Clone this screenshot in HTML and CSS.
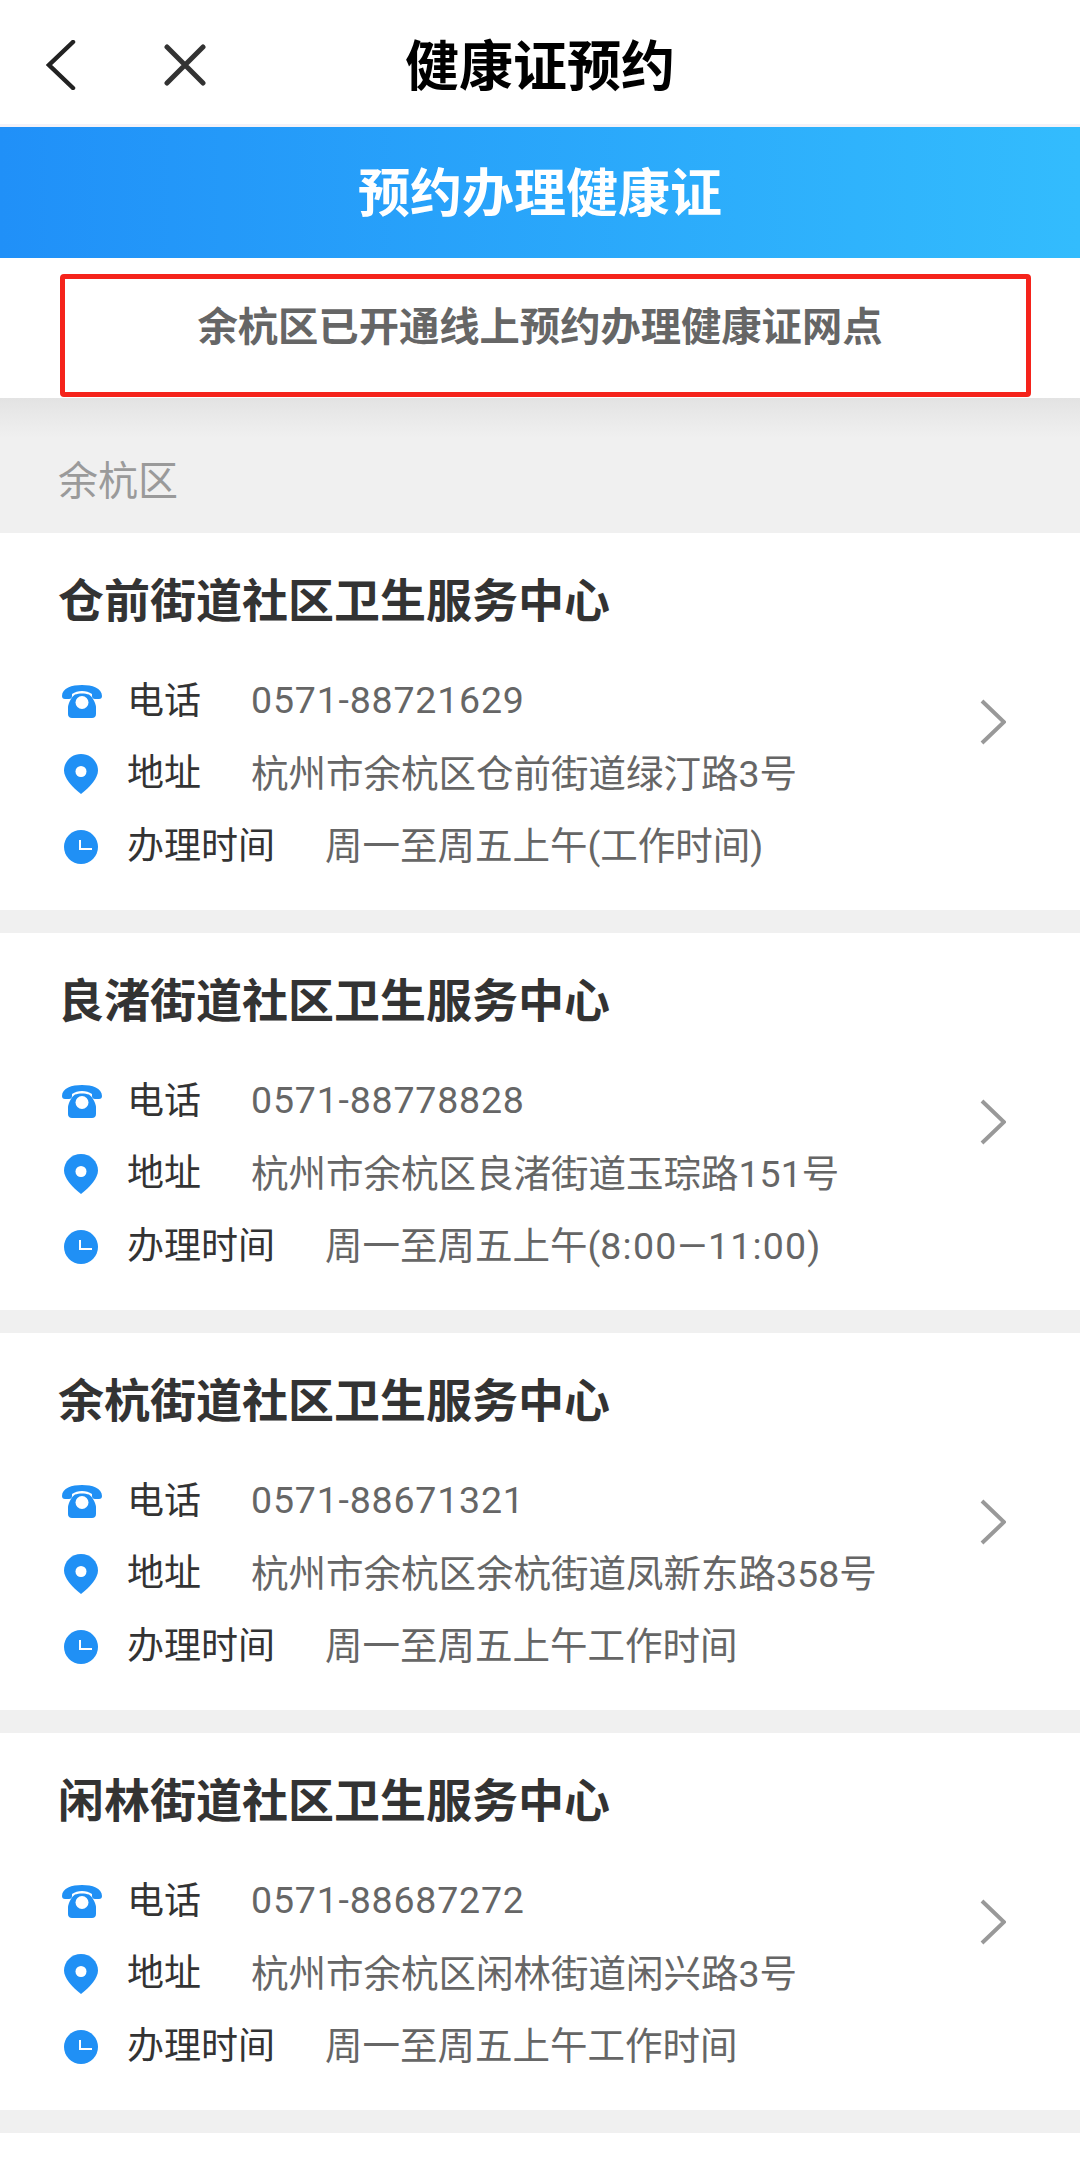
FILE: index.html
```html
<!DOCTYPE html>
<html lang="zh-CN">
<head>
    <meta charset="UTF-8">
    <meta name="viewport" content="width=device-width, initial-scale=1.0">
    <title>健康证预约</title>
    <link rel="stylesheet" href="styles.css">
</head>
<body>
    <svg class="svg-defs" width="0" height="0">
        <defs>
            <symbol id="icon-phone" viewBox="0 0 40 33">
                <path fill="#2090f5" d="M0 11C0 3 10 0 20 0s20 3 20 11c0 2-1 3-3 3h-4c-2 0-3-1-3-3V9C27 7 24 6 20 6S13 7 10 9v2c0 2-1 3-3 3H3c-2 0-3-1-3-3z"/>
                <path fill="#2090f5" d="M13 9.500c4-1.500 10-1.500 14 0 3 2 6 7 7 12V29c0 2.500-1.500 4-4 4H10c-2.500 0-4-1.500-4-4v-7.500c1-5 4-10 7-12z"/>
                <circle cx="20" cy="17.500" r="6.500" fill="#fff"/>
            </symbol>
            <symbol id="icon-pin" viewBox="0 0 34 40">
                <path fill="#2090f5" d="M17 0C7.500 0 0 7.500 0 16.500 0 24 8 33 17 40c9-7 17-16 17-23.500C34 7.500 26.500 0 17 0z"/>
                <circle cx="17" cy="17.500" r="5.500" fill="#fff"/>
            </symbol>
            <symbol id="icon-clock" viewBox="0 0 34 34">
                <circle cx="17" cy="17" r="17" fill="#2090f5"/>
                <path fill="none" stroke="#fff" stroke-width="2" d="M16 10V19H28"/>
            </symbol>
            <symbol id="icon-more" viewBox="0 0 26 46">
                <path fill="none" stroke="#999" stroke-width="4" d="M2 2L24 23 2 44"/>
            </symbol>
        </defs>
    </svg>

    <div class="page">
        <header class="nav-bar">
            <div class="nav-icons">
                <svg class="nav-back" viewBox="0 0 30 50"><path fill="none" stroke="#222" stroke-width="4.500" stroke-linecap="round" d="M27 2L3 25 27 48"/></svg>
                <svg class="nav-close" viewBox="0 0 42 42"><path fill="none" stroke="#333" stroke-width="5" stroke-linecap="round" d="M3 3L39 39M39 3L3 39"/></svg>
            </div>
            <h1 class="nav-title">健康证预约</h1>
        </header>

        <div class="banner">预约办理健康证</div>

        <div class="notice">
            <div class="notice-box">余杭区已开通线上预约办理健康证网点</div>
        </div>

        <div class="district">余杭区</div>

        <section class="card">
            <div class="card-main">
                <h2 class="card-title">仓前街道社区卫生服务中心</h2>
                <div class="row">
                    <svg class="row-icon icon-wide"><use href="#icon-phone"/></svg>
                    <span class="row-label">电话</span>
                    <span class="row-value phone">0571-88721629</span>
                </div>
                <div class="row">
                    <svg class="row-icon icon-tall"><use href="#icon-pin"/></svg>
                    <span class="row-label">地址</span>
                    <span class="row-value">杭州市余杭区仓前街道绿汀路3号</span>
                </div>
                <div class="row">
                    <svg class="row-icon icon-round"><use href="#icon-clock"/></svg>
                    <span class="row-label">办理时间</span>
                    <span class="row-value">周一至周五上午(工作时间)</span>
                </div>
            </div>
            <svg class="card-more"><use href="#icon-more"/></svg>
        </section>

        <section class="card">
            <div class="card-main">
                <h2 class="card-title">良渚街道社区卫生服务中心</h2>
                <div class="row">
                    <svg class="row-icon icon-wide"><use href="#icon-phone"/></svg>
                    <span class="row-label">电话</span>
                    <span class="row-value phone">0571-88778828</span>
                </div>
                <div class="row">
                    <svg class="row-icon icon-tall"><use href="#icon-pin"/></svg>
                    <span class="row-label">地址</span>
                    <span class="row-value">杭州市余杭区良渚街道玉琮路151号</span>
                </div>
                <div class="row">
                    <svg class="row-icon icon-round"><use href="#icon-clock"/></svg>
                    <span class="row-label">办理时间</span>
                    <span class="row-value">周一至周五上午(<span class="hours">8:00—11:00</span>)</span>
                </div>
            </div>
            <svg class="card-more"><use href="#icon-more"/></svg>
        </section>

        <section class="card">
            <div class="card-main">
                <h2 class="card-title">余杭街道社区卫生服务中心</h2>
                <div class="row">
                    <svg class="row-icon icon-wide"><use href="#icon-phone"/></svg>
                    <span class="row-label">电话</span>
                    <span class="row-value phone">0571-88671321</span>
                </div>
                <div class="row">
                    <svg class="row-icon icon-tall"><use href="#icon-pin"/></svg>
                    <span class="row-label">地址</span>
                    <span class="row-value">杭州市余杭区余杭街道凤新东路358号</span>
                </div>
                <div class="row">
                    <svg class="row-icon icon-round"><use href="#icon-clock"/></svg>
                    <span class="row-label">办理时间</span>
                    <span class="row-value">周一至周五上午工作时间</span>
                </div>
            </div>
            <svg class="card-more"><use href="#icon-more"/></svg>
        </section>

        <section class="card">
            <div class="card-main">
                <h2 class="card-title">闲林街道社区卫生服务中心</h2>
                <div class="row">
                    <svg class="row-icon icon-wide"><use href="#icon-phone"/></svg>
                    <span class="row-label">电话</span>
                    <span class="row-value phone">0571-88687272</span>
                </div>
                <div class="row">
                    <svg class="row-icon icon-tall"><use href="#icon-pin"/></svg>
                    <span class="row-label">地址</span>
                    <span class="row-value">杭州市余杭区闲林街道闲兴路3号</span>
                </div>
                <div class="row">
                    <svg class="row-icon icon-round"><use href="#icon-clock"/></svg>
                    <span class="row-label">办理时间</span>
                    <span class="row-value">周一至周五上午工作时间</span>
                </div>
            </div>
            <svg class="card-more"><use href="#icon-more"/></svg>
        </section>

        <div class="card-next"></div>
    </div>
</body>
</html>
```

FILE: styles.css
```css
html, body {
    margin: 0;
    padding: 0;
}

body {
    font-family: "Roboto", "Noto Sans CJK SC", sans-serif;
    background-color: #f0f0f0;
}

.svg-defs {
    display: block;
    height: 0;
}

.page {
    height: 2167px;
    overflow: hidden;
    background-color: #f0f0f0;
}

/* top bar */
.nav-bar {
    height: 124px;
    display: flex;
    align-items: center;
    justify-content: center;
    background-color: #ffffff;
    position: relative;
    border-bottom: 3px solid #f4f2f8;
}

.nav-icons {
    position: absolute;
    left: 46px;
    top: 40px;
    display: flex;
    align-items: center;
    gap: 88px;
}

.nav-back {
    width: 30px;
    height: 50px;
}

.nav-close {
    width: 42px;
    height: 42px;
}

.nav-title {
    margin: 12px 0 0;
    font-size: 54px;
    font-weight: 700;
    line-height: 64px;
    color: #000000;
}

.banner {
    height: 131px;
    box-sizing: border-box;
    padding-bottom: 7px;
    display: flex;
    align-items: center;
    justify-content: center;
    background: linear-gradient(90deg, #2090f8, #33bcfd);
    color: #ffffff;
    font-size: 52px;
    font-weight: 700;
}

.notice {
    height: 140px;
    padding: 16px 49px 0 60px;
    box-sizing: border-box;
    background-color: #ffffff;
}

.notice-box {
    height: 123px;
    box-sizing: border-box;
    padding: 21px 11px 0 0;
    border: 5px solid #f5231b;
    border-radius: 4px;
    text-align: center;
    color: #666666;
    font-size: 40.3px;
    font-weight: 700;
    line-height: 56px;
}

.district {
    height: 135px;
    box-sizing: border-box;
    padding: 59px 0 0 58px;
    background: linear-gradient(180deg, #e3e3e3, #f0f0f0 40px);
    color: #9a9a9a;
    font-size: 40px;
    line-height: 50px;
}

/* service point cards */
.card {
    height: 377px;
    margin-bottom: 23px;
    box-sizing: border-box;
    display: flex;
    align-items: center;
    justify-content: space-between;
    padding: 0 74px 0 62px;
    background-color: #ffffff;
}

.card-main {
    flex: 1;
    padding-top: 10px;
}

.card-title {
    margin: 0 0 34px -4px;
    font-size: 46px;
    font-weight: 700;
    line-height: 58px;
    color: #333333;
}

.row {
    height: 72.5px;
    box-sizing: border-box;
    padding-bottom: 5px;
    display: flex;
    align-items: center;
    font-size: 37.5px;
}

.row-icon {
    flex: none;
    margin-top: 8px;
    margin-right: 25px;
}

.icon-wide {
    width: 40px;
    height: 33px;
}

.icon-tall {
    width: 34px;
    height: 40px;
    margin-left: 2px;
    margin-right: 29px;
}

.icon-round {
    width: 34px;
    height: 34px;
    margin-left: 2px;
    margin-right: 29px;
}

.row-label {
    color: #333333;
    font-size: 37px;
    margin-right: 50px;
}

.row-value {
    color: #666666;
}

.phone {
    padding-top: 4px;
    letter-spacing: 0.8px;
}

.hours {
    letter-spacing: 1.2px;
}

.card-more {
    flex: none;
    width: 26px;
    height: 46px;
}

.card-next {
    height: 40px;
    background-color: #ffffff;
}
```
